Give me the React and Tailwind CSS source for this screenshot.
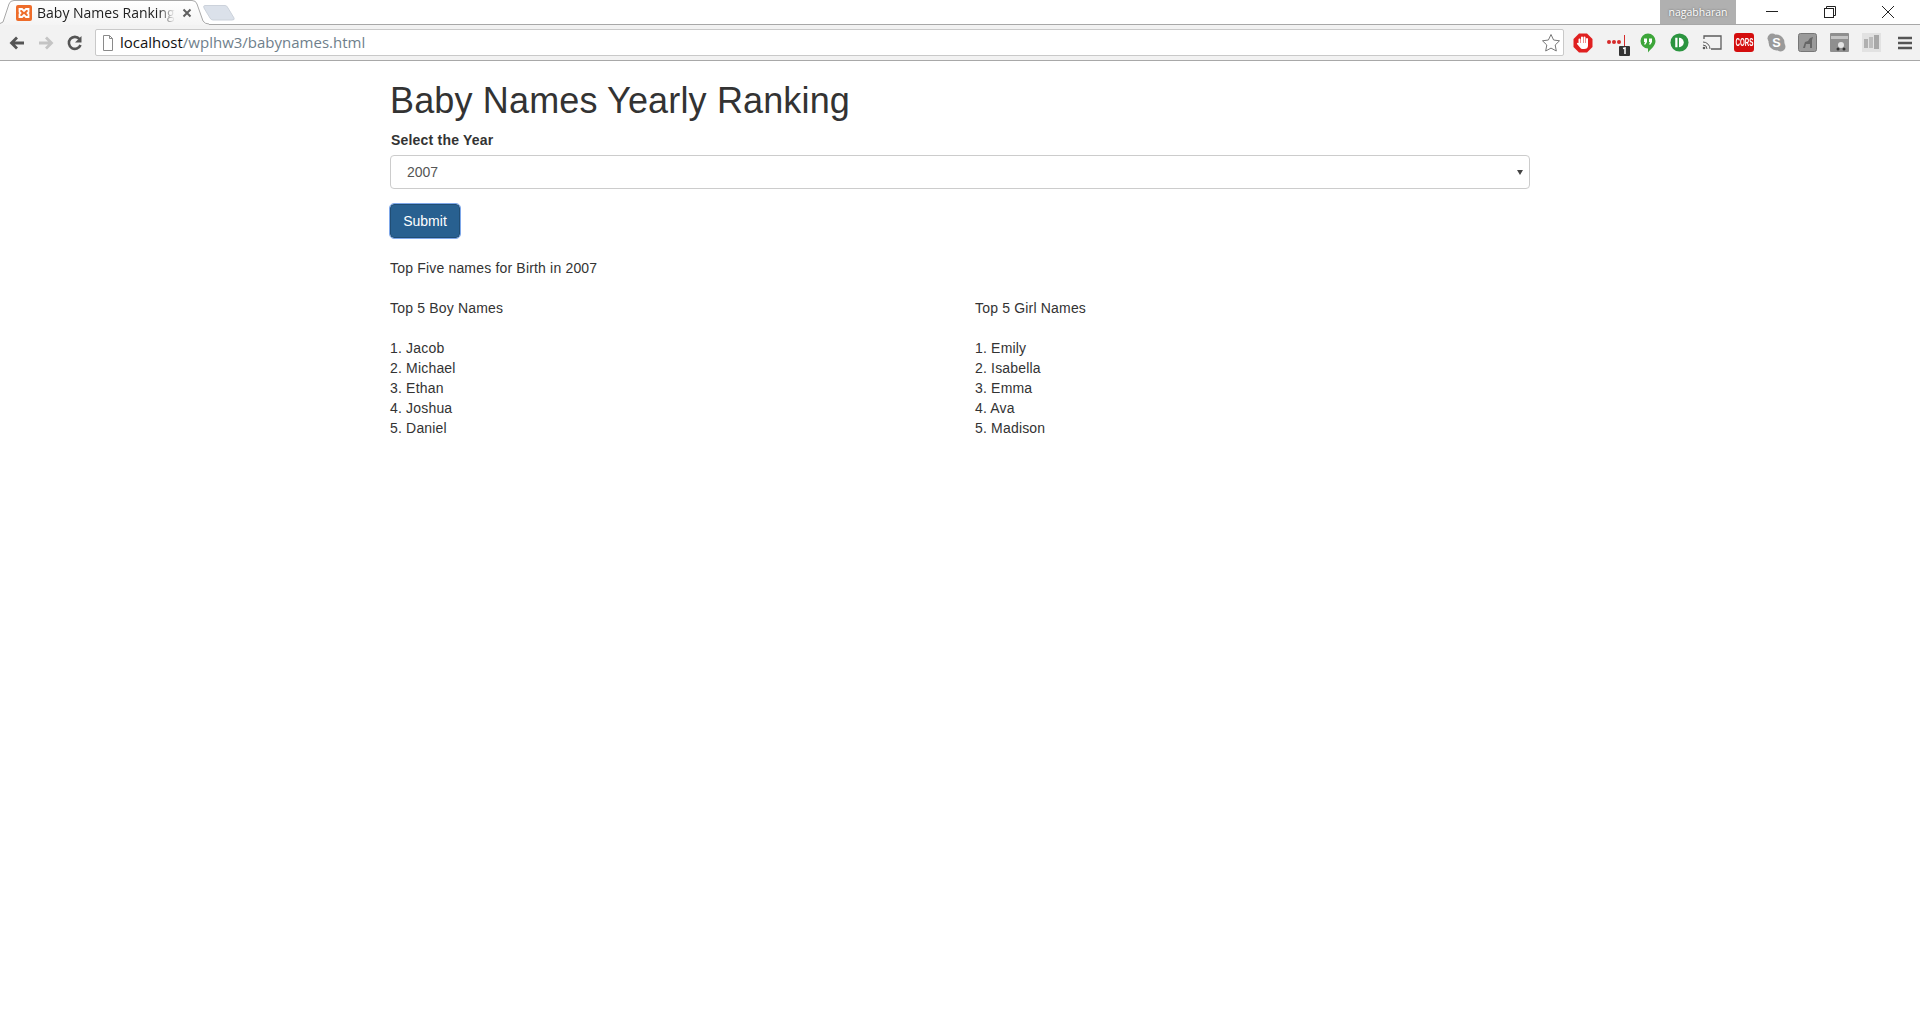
import React from "react";

function Tab() {
  return (
    <div className="h-[25px] relative z-10">
      <svg width="240" height="25" className="absolute left-0 top-0" viewBox="0 0 240 25">
        <defs>
          <linearGradient id="tabfill" x1="0" y1="0" x2="0" y2="1">
            <stop offset="0" stopColor="#ffffff" />
            <stop offset="1" stopColor="#f4f4f4" />
          </linearGradient>
        </defs>
        <path d="M0 25 L0 23 L3 22 L9 4 Q10 1 14 1 L192 1 Q196 1 197 4 L203 21 Q205 24 209 24 L209 25Z" fill="url(#tabfill)" />
        <path d="M0 23.500 L3 22 L9 4 Q10 .5 14 .5 L192 .5 Q196 .5 197 4 L203 21 Q205 24 209 24" fill="none" stroke="#a8a8a8" />
        <path d="M205 5.500 H225 Q227 5.500 228 8 L234 18 Q235 20 232 20 H213 Q211 20 210 18 L204 8 Q203 5.500 205 5.500Z" fill="#dbe1ea" stroke="#ccd2db" />
      </svg>
      <div className="relative flex items-center h-[25px] pl-[16px] w-[200px]">
        <svg width="16" height="16" viewBox="0 0 16 16" className="shrink-0">
          <rect width="16" height="16" rx="2" fill="#ee6c2a" />
          <path d="M3.500 4 H6 L8 6 L10 4 H12.500 V7 L11.500 8 L12.500 9 V12 H10 L8 10 L6 12 H3.500 V9 L4.500 8 L3.500 7Z" fill="none" stroke="#fff" strokeWidth="1.800" />
        </svg>
        <span className="ml-[5px] w-[138px] whitespace-nowrap text-[14px] leading-[25px] text-[#222] font-['Open_Sans',sans-serif] [mask-image:linear-gradient(to_right,#000_88%,transparent_100%)]">Baby Names Ranking</span>
        <svg width="10" height="10" viewBox="0 0 10 10" className="ml-[7px] shrink-0">
          <path d="M1.500 1.500 L8.500 8.500 M8.500 1.500 L1.500 8.500" stroke="#5f5f5f" strokeWidth="2" />
        </svg>
      </div>
    </div>
  );
}

function Controls() {
  return (
    <div className="flex items-start h-[24px] pr-[3px]">
      <div className="w-[76px] h-[24px] mr-[7px] bg-[#b0b0b0] flex items-center justify-center text-[10.5px] text-white font-['Open_Sans',sans-serif] [text-shadow:0_0_2px_#555]">nagabharan</div>
      <div className="w-[58px] h-[24px] flex items-center justify-center">
        <svg width="14" height="14" viewBox="0 0 14 14"><path d="M1 6.500 H13" stroke="#222" /></svg>
      </div>
      <div className="w-[58px] h-[24px] flex items-center justify-center">
        <svg width="14" height="14" viewBox="0 0 14 14" fill="none" stroke="#222"><rect x="1.500" y="3.500" width="9" height="9" /><path d="M3.500 3 V1.500 H12.500 V10.500 H11" /></svg>
      </div>
      <div className="w-[58px] h-[24px] flex items-center justify-center">
        <svg width="14" height="14" viewBox="0 0 14 14"><path d="M1 1 L13 13 M13 1 L1 13" stroke="#222" /></svg>
      </div>
    </div>
  );
}

function Nav() {
  return (
    <div className="flex items-center h-[35px]">
      <svg width="18" height="18" viewBox="0 0 18 18" className="ml-[8px]"><path d="M16 9 H4 M9 3.500 L3.500 9 L9 14.500" fill="none" stroke="#555" strokeWidth="2.800" /></svg>
      <svg width="18" height="18" viewBox="0 0 18 18" className="ml-[11px]"><path d="M2 9 H14 M9 3.500 L14.500 9 L9 14.500" fill="none" stroke="#c4c4c4" strokeWidth="2.800" /></svg>
      <svg width="18" height="18" viewBox="0 0 18 18" className="ml-[11px]"><path d="M14.500 11 A6 6 0 1 1 13.500 5" fill="none" stroke="#555" strokeWidth="2.600" /><path d="M15.500 2 V8.500 H9Z" fill="#555" /></svg>
    </div>
  );
}

function Extensions() {
  return (
    <div className="flex items-center h-[35px] w-[356px] shrink-0">
      <svg width="20" height="20" viewBox="0 0 20 20" className="ml-[9px] shrink-0">
        <path d="M6 .5 H14 L19.500 6 V14 L14 19.500 H6 L.5 14 V6Z" fill="#e02020" />
        <path d="M6.500 11 V6.500 M9 11 V4.500 M11.500 11 V4.500 M14 11 V6" stroke="#fff" strokeWidth="2" strokeLinecap="round" fill="none" />
        <path d="M5.500 10 H15 V12.500 Q15 16 11 16 H9.500 Q8 16 7 14.500 L3.800 10.800 Q4.500 9.500 5.500 10Z" fill="#fff" />
      </svg>
      <svg width="26" height="24" viewBox="0 0 26 24" className="ml-[13px] shrink-0 mt-[4px]"><circle cx="3" cy="9" r="2" fill="#d62a2a" /><circle cx="8" cy="9" r="2" fill="#d62a2a" /><circle cx="13" cy="9" r="2" fill="#d62a2a" /><path d="M18.500 2 V14" stroke="#d62a2a" /><rect x="13" y="13" width="11" height="10" rx="1" fill="#333" /><path d="M17 15.500 L19 15 V21" stroke="#fff" strokeWidth="1.500" fill="none" /></svg>
      <svg width="16" height="20" viewBox="0 0 16 20" className="ml-[8px] shrink-0"><path d="M8 0.500 A7.500 7.500 0 0 1 15.500 8 C15.500 13 11 15.500 8 19.500 V15.500 A7.500 7.500 0 0 1 8 0.500Z" fill="#3da63a" /><path d="M4 5.500 H7 V9 L5.500 11.500 H4 L5 9 H4Z M9 5.500 H12 V9 L10.500 11.500 H9 L10 9 H9Z" fill="#fff" /></svg>
      <svg width="19" height="19" viewBox="0 0 20 20" className="ml-[14px] shrink-0"><circle cx="10" cy="10" r="9.500" fill="#2c9540" /><rect x="5.500" y="5" width="2.400" height="10" fill="#fff" /><path d="M9.500 5 A5 5 0 0 1 9.500 15Z" fill="#fff" /></svg>
      <svg width="20" height="16" viewBox="0 0 20 16" className="ml-[13px] shrink-0"><path d="M2 4 V1 H19 V14 H9" fill="none" stroke="#5c5c5c" strokeWidth="1.300" /><path d="M1 7 A7 7 0 0 1 8 14 M1 10 A4 4 0 0 1 5 14" fill="none" stroke="#5c5c5c" /><circle cx="2" cy="13" r="1.300" fill="#5c5c5c" /></svg>
      <div className="ml-[12px] w-[20px] h-[19px] shrink-0 rounded-[3px] bg-[#d40d0d] flex items-center justify-center overflow-hidden">
        <span className="text-white text-[10px] font-bold leading-[19px] tracking-normal scale-x-[0.62] font-['Liberation_Sans',sans-serif]">CORS</span>
      </div>
      <svg width="19" height="19" viewBox="0 0 18 18" className="ml-[13px] shrink-0"><circle cx="9" cy="9" r="7.500" fill="#9a9a9a" /><circle cx="5" cy="5" r="4.500" fill="#9a9a9a" /><circle cx="13" cy="13" r="4.500" fill="#9a9a9a" /><text x="9" y="13" textAnchor="middle" fontSize="12" fontWeight="bold" fill="#fff" fontFamily="Liberation Sans">S</text></svg>
      <svg width="19" height="19" viewBox="0 0 19 19" className="ml-[12px] shrink-0"><rect x="0.500" y="0.500" width="18" height="18" rx="2" fill="#9a9a9a" stroke="#777" /><path d="M5 15 L7 9 L10 8 L12 5 L15 4 L14 7 L14 15 H12 V11 H8 L7 15Z" fill="#666" /></svg>
      <svg width="19" height="19" viewBox="0 0 19 19" className="ml-[13px] shrink-0"><rect width="19" height="19" rx="1" fill="#8f8f8f" /><rect x="1" y="3" width="17" height="3" fill="#c4c4c4" /><circle cx="11" cy="12" r="3" fill="#e4e4e4" /><circle cx="8" cy="16" r="1.500" fill="#333" /><circle cx="14" cy="16" r="1.500" fill="#333" /></svg>
      <svg width="19" height="19" viewBox="0 0 19 19" className="ml-[13px] shrink-0"><rect width="19" height="19" fill="#e2e2e2" /><rect x="2" y="6" width="4" height="9" fill="#b0b0b0" /><rect x="7" y="4" width="4" height="11" fill="#bcbcbc" /><rect x="12" y="2" width="5" height="14" fill="#a8a8a8" /></svg>
      <svg width="14" height="14" viewBox="0 0 14 14" className="ml-[17px] shrink-0"><path d="M0 2 H14 M0 7 H14 M0 12 H14" stroke="#555" strokeWidth="2.400" /></svg>
    </div>
  );
}

const boys = ["Jacob", "Michael", "Ethan", "Joshua", "Daniel"];
const girls = ["Emily", "Isabella", "Emma", "Ava", "Madison"];

function NameList({ title, names }) {
  return (
    <div className="w-[585px] shrink-0">
      <p className="h-[40px]">{title}</p>
      {names.map((n, i) => (
        <p key={n}>{i + 1}. {n}</p>
      ))}
    </div>
  );
}

export default function App() {
  return (
    <div className="min-h-[1030px] bg-white font-['Liberation_Sans',sans-serif] text-[14px] leading-[20px] text-[#333] tracking-[0.18px] overflow-hidden">
      <header className="h-[61px] bg-[#f2f2f2] border-b border-[#a8a8a8] flex flex-col tracking-normal">
        <div className="h-[25px] bg-white border-b border-[#a8a8a8] flex justify-between">
          <Tab />
          <Controls />
        </div>
        <div className="h-[35px] flex items-start">
          <Nav />
          <div className="ml-[11px] mt-[4px] flex-1 h-[27px] bg-white border border-[#c9c9c9] rounded-[2px] flex items-center pl-[6px] pr-[2px] font-['Open_Sans',sans-serif] text-[15px]">
            <svg width="12" height="16" viewBox="0 0 12 16" fill="none" stroke="#8a8a8a" className="shrink-0"><path d="M1.500 .5 H7.500 L10.500 3.500 V15.500 H1.500Z M7.500 .5 V3.500 H10.500" /></svg>
            <span className="ml-[6px] -mt-[2px] text-[#111]">localhost</span>
            <span className="-mt-[2px] text-[#6f7f8c]">/wplhw3/babynames.html</span>
            <svg width="20" height="20" viewBox="0 0 20 20" className="ml-auto" fill="#fff" stroke="#777"><path d="M10 1.500 L12.600 7 L18.500 7.800 L14.200 12 L15.300 18 L10 15.100 L4.700 18 L5.800 12 L1.500 7.800 L7.400 7Z" /></svg>
          </div>
          <Extensions />
        </div>
      </header>
      <main className="w-[1140px] ml-[390px]">
        <h1 className="text-[36px] leading-[40px] font-normal mt-[20px] mb-[9px] tracking-[0.15px]">Baby Names Yearly Ranking</h1>
        <label className="block font-bold pl-[1px] tracking-[0.2px] mb-[5px]">Select the Year</label>
        <div className="relative h-[34px] border border-[#ccc] rounded-[4px] flex items-center justify-between pl-[16px] pr-[6px] text-[#555] tracking-normal">
          <span>2007</span>
          <span className="w-0 h-0 border-l-[3px] border-r-[3px] border-t-[5px] border-l-transparent border-r-transparent border-t-[#444]"></span>
        </div>
        <button className="block mt-[15px] w-[70px] h-[34px] bg-[#286090] border border-[#204d74] rounded-[4px] text-white tracking-normal outline outline-[1px] outline-[#7fa8ea]">Submit</button>
        <p className="mt-[20px] h-[40px]">Top Five names for Birth in 2007</p>
        <div className="flex">
          <NameList title="Top 5 Boy Names" names={boys} />
          <NameList title="Top 5 Girl Names" names={girls} />
        </div>
      </main>
    </div>
  );
}
